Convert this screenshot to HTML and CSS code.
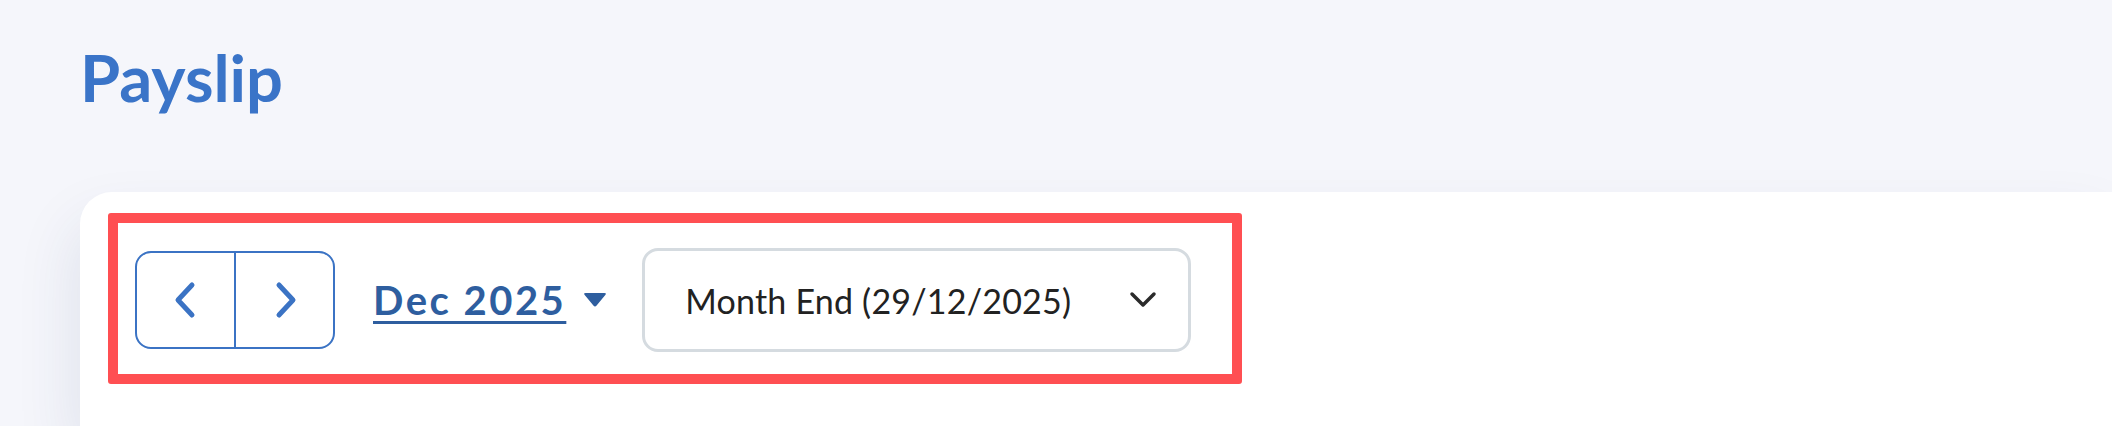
FILE: index.html
```html
<!DOCTYPE html>
<html lang="en">
<head>
<meta charset="utf-8">
<title>Payslip</title>
<link rel="stylesheet" href="styles.css">
</head>
<body>
  <header class="page-header">
    <h1 class="page-title">Payslip</h1>
  </header>
  <main class="card">
    <div class="highlight">
      <div class="toolbar">
        <div class="nav-group">
          <div class="nav-btn" role="button" aria-label="Previous month">
            <svg class="chev" viewBox="0 0 26 38" width="26" height="38"><path d="M19 4 L5 19 L19 34" fill="none" stroke="#3b73c4" stroke-width="5" stroke-linecap="round" stroke-linejoin="round"/></svg>
          </div>
          <div class="nav-btn" role="button" aria-label="Next month">
            <svg class="chev" viewBox="0 0 26 38" width="26" height="38"><path d="M7 4 L21 19 L7 34" fill="none" stroke="#3b73c4" stroke-width="5" stroke-linecap="round" stroke-linejoin="round"/></svg>
          </div>
        </div>
        <div class="month-picker">
          <a class="month-link" href="#">Dec 2025</a>
          <svg class="caret" viewBox="0 0 24 16" width="24" height="16"><path d="M2.5 1 H21.5 Q24 1 22.3 2.9 L13.6 13.6 Q12 15.4 10.4 13.6 L1.7 2.9 Q0 1 2.5 1 Z"/></svg>
        </div>
        <div class="select">
          <span class="select-text">Month End (29/12/2025)</span>
          <svg class="select-chev" viewBox="0 0 28 18" width="28" height="18"><path d="M3 3 L14 14 L25 3" fill="none" stroke="#2b2b2b" stroke-width="3.5" stroke-linecap="round" stroke-linejoin="round"/></svg>
        </div>
      </div>
    </div>
  </main>
</body>
</html>
```
FILE: styles.css
```css
html, body {
  margin: 0;
  padding: 0;
}
body {
  background: #f5f6fb;
  font-family: "Lato", "Inter", sans-serif;
  width: 2112px;
  height: 426px;
  overflow: hidden;
}
.page-header {
  padding: 45px 0 0 80px;
  height: 150px;
  box-sizing: border-box;
}
.page-title {
  margin: 0;
  font-size: 65px;
  line-height: 64px;
  font-weight: 700;
  color: #3a74c8;
}
.card {
  margin-left: 80px;
  background: #ffffff;
  border-radius: 32px 0 0 0;
  height: 234px;
  margin-top: 42px;
  box-shadow: -6px 30px 60px rgba(40, 55, 110, 0.10);
  padding: 21px 0 0 28px;
  box-sizing: border-box;
}
.highlight {
  display: inline-flex;
  border: 10px solid #ff4f52;
  border-radius: 3px;
  padding: 25px 41px 22px 17px;
}
.toolbar {
  display: flex;
  align-items: center;
}
.nav-group {
  display: flex;
  width: 200px;
  height: 98px;
  box-sizing: border-box;
  border: 2.5px solid #3b73c4;
  border-radius: 16px;
  overflow: hidden;
}
.nav-btn {
  flex: 1;
  display: flex;
  align-items: center;
  justify-content: center;
  cursor: pointer;
}
.nav-btn + .nav-btn {
  border-left: 2.5px solid #3b73c4;
}
.chev {
  display: block;
}
.month-picker {
  display: flex;
  align-items: center;
  margin-left: 38px;
  gap: 17px;
}
.month-link {
  font-size: 40px;
  font-weight: 700;
  color: #2e5e9f;
  letter-spacing: 2.5px;
  text-decoration: underline;
  text-decoration-thickness: 3px;
  text-underline-offset: 6px;
}
.caret {
  fill: #2e5e9f;
  display: block;
}
.select {
  margin-left: 35px;
  width: 549px;
  height: 104px;
  box-sizing: border-box;
  border: 3px solid #d5dbe0;
  border-radius: 16px;
  display: flex;
  align-items: center;
  justify-content: space-between;
  padding: 0 31px 0 40px;
}
.select-text {
  font-size: 34px;
  color: #222222;
  letter-spacing: 0.2px;
}
.select-chev {
  display: block;
}
```
